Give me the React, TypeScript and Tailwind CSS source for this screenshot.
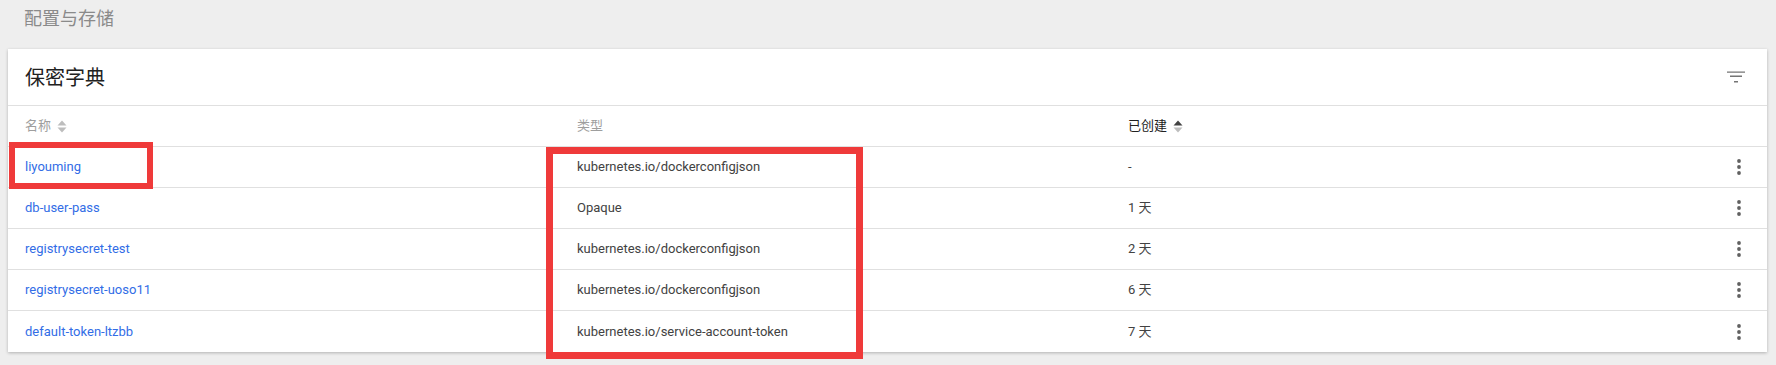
import React from 'react'

const font = { fontFamily: 'Roboto, "Noto Sans CJK SC", sans-serif' }

type Secret = {
  name: string
  type: string
  age: string
}

const secrets: Secret[] = [
  { name: 'liyouming', type: 'kubernetes.io/dockerconfigjson', age: '-' },
  { name: 'db-user-pass', type: 'Opaque', age: '1 天' },
  { name: 'registrysecret-test', type: 'kubernetes.io/dockerconfigjson', age: '2 天' },
  { name: 'registrysecret-uoso11', type: 'kubernetes.io/dockerconfigjson', age: '6 天' },
  { name: 'default-token-ltzbb', type: 'kubernetes.io/service-account-token', age: '7 天' },
]

function SortIcon({ active }: { active?: boolean }) {
  return (
    <svg width="10" height="13" viewBox="0 0 10 13" className="ml-[6px]">
      <path d="M5 0.5 L9.5 5.5 H0.5 Z" fill={active ? '#424242' : '#bdbdbd'} />
      <path d="M5 12.5 L9.5 7.5 H0.5 Z" fill="#bdbdbd" />
    </svg>
  )
}

function FilterIcon() {
  return (
    <svg width="24" height="24" viewBox="0 0 24 24" fill="#757575">
      <path d="M10 17.5h4v-1.6h-4v1.6zM3 6.4v1.4h18V6.4H3zm3 5.6h12v-1.4H6V12z" />
    </svg>
  )
}

function MoreIcon() {
  return (
    <svg width="24" height="24" viewBox="0 0 24 24" fill="#616161">
      <circle cx="12" cy="6" r="1.9" />
      <circle cx="12" cy="12" r="1.9" />
      <circle cx="12" cy="18" r="1.9" />
    </svg>
  )
}

export default function App() {
  return (
    <div className="relative h-[365px] w-full bg-[#eeeeee] overflow-hidden" style={font}>
      {/* Breadcrumb title */}
      <div className="h-[49px] pl-6 pt-[7px] text-[18px] leading-6 text-[#8a8a8a]">
        配置与存储
      </div>

      {/* Card */}
      <div className="ml-2 w-[1759px] bg-white shadow-[0_1px_3px_rgba(0,0,0,0.25)]">
        <div className="flex h-[57px] items-center justify-between border-b border-[#e0e0e0] pl-[17px] pr-[19px]">
          <h2 className="pt-[2px] text-[20px] text-[#212121]">保密字典</h2>
          <FilterIcon />
        </div>

        <div className="grid h-[41px] grid-cols-[552px_551px_1fr_56px] items-center border-b border-[#e0e0e0] pl-[17px] text-[13px]">
          <div className="flex items-center text-[#9e9e9e]">
            名称
            <SortIcon />
          </div>
          <div className="text-[#9e9e9e]">类型</div>
          <div className="flex items-center text-[#212121]">
            已创建
            <SortIcon active />
          </div>
          <div />
        </div>

        {secrets.map((s, i) => (
          <div
            key={s.name}
            className={`grid h-[41px] grid-cols-[552px_551px_1fr_56px] items-center pl-[17px] text-[13px] ${
              i < secrets.length - 1 ? 'border-b border-[#e0e0e0]' : ''
            }`}
          >
            <a className="text-[#326de6]">{s.name}</a>
            <div className="text-[#424242]">{s.type}</div>
            <div className="text-[#424242]">{s.age}</div>
            <div className="flex justify-center">
              <MoreIcon />
            </div>
          </div>
        ))}
      </div>

      {/* Annotation boxes */}
      <div className="absolute left-[9px] top-[142px] h-[47px] w-[144px] border-[6px] border-[#ef3a3a]" />
      <div className="absolute left-[546px] top-[147px] h-[212px] w-[317px] border-[7px] border-[#ef3a3a]" />
    </div>
  )
}
